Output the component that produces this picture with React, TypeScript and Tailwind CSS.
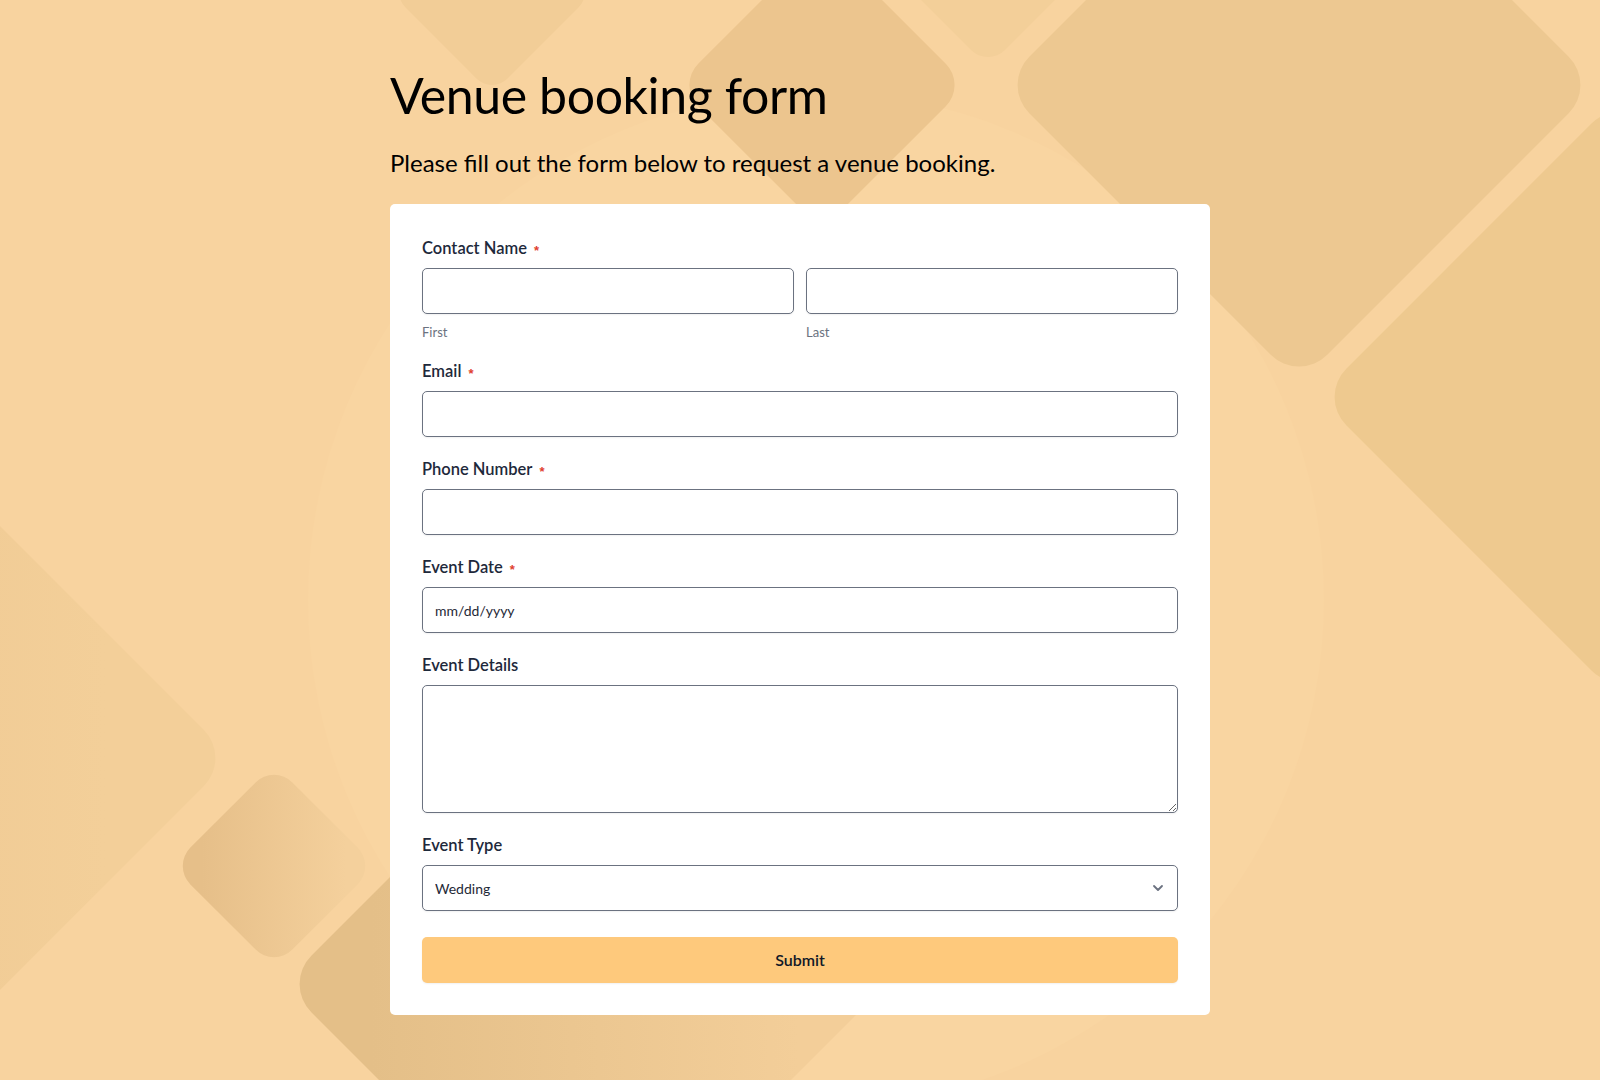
import { ChevronDown } from "lucide-react";

type DiamondProps = { cx: number; cy: number; r: number; rx: number; fill: string };

function Diamond({ cx, cy, r, rx, fill }: DiamondProps) {
    const side = r * Math.SQRT2;
    return (
        <rect
            x={cx - side / 2}
            y={cy - side / 2}
            width={side}
            height={side}
            rx={rx}
            fill={fill}
            transform={`rotate(45 ${cx} ${cy})`}
        />
    );
}

function Backdrop() {
    return (
        <svg className="absolute inset-0 h-full w-full" viewBox="0 0 1600 1080" preserveAspectRatio="none">
            <defs>
                <linearGradient id="gLeft" gradientTransform="rotate(-45 .5 .5)">
                    <stop offset="0" stopColor="#eac28b" />
                    <stop offset="1" stopColor="#f3cf99" />
                </linearGradient>
                <linearGradient id="gSmall" gradientTransform="rotate(-45 .5 .5)">
                    <stop offset="0" stopColor="#e6bf89" />
                    <stop offset="1" stopColor="#f4d09c" />
                </linearGradient>
                <linearGradient id="gBottom" gradientTransform="rotate(-45 .5 .5)">
                    <stop offset="0" stopColor="#e4bf88" />
                    <stop offset="1" stopColor="#f3ce99" />
                </linearGradient>
            </defs>
            <circle cx={816} cy={600} r={508} fill="#f9d5a1" />
            <Diamond cx={492} cy={-8} r={102} rx={22} fill="#f2cd97" />
            <Diamond cx={822} cy={85} r={145} rx={30} fill="#ecc58e" />
            <Diamond cx={988} cy={-45} r={112} rx={24} fill="#f3cf99" />
            <Diamond cx={1299} cy={85} r={298} rx={40} fill="#edc891" />
            <Diamond cx={1620} cy={397} r={302} rx={40} fill="#eec98f" />
            <Diamond cx={-198} cy={758} r={430} rx={40} fill="url(#gLeft)" />
            <Diamond cx={274} cy={866} r={102} rx={26} fill="url(#gSmall)" />
            <Diamond cx={585} cy={984} r={302} rx={40} fill="url(#gBottom)" />
        </svg>
    );
}

function Label({ text, required }: { text: string; required?: boolean }) {
    return (
        <label className="mb-2 flex h-6 items-center text-[16.5px] font-semibold text-[#1e293b]">
            {text}
            {required && (
                <span className="ml-[7px] translate-y-[3px] font-['Liberation_Sans',sans-serif] text-[13px] text-[#e0402f]">
                    *
                </span>
            )}
        </label>
    );
}

const inputCls =
    "block h-[46px] w-full rounded-[5px] border border-[#6b7280] bg-white px-3 text-[14px] text-[#1f2937] shadow-[0_1px_2px_rgba(0,0,0,0.06)] outline-none";

export default function App() {
    return (
        <div className="relative min-h-[1080px] w-full overflow-hidden bg-[#f8d39f] font-['Lato',sans-serif]">
            <Backdrop />
            <div className="relative mx-auto w-[820px] pt-[65px] pb-16">
                <h1 className="text-[50px] leading-[60px] tracking-[-0.4px] text-black">Venue booking form</h1>
                <p className="mt-[22px] text-[24px] leading-[32px] text-black">
                    Please fill out the form below to request a venue booking.
                </p>
                <form className="mt-[25px] rounded-[5px] bg-white p-8" onSubmit={(e) => e.preventDefault()}>
                    <Label text="Contact Name" required />
                    <div className="grid grid-cols-2 gap-3">
                        <div>
                            <input className={inputCls} />
                            <div className="mt-[10px] text-[13px] leading-4 text-[#6b7280]">First</div>
                        </div>
                        <div>
                            <input className={inputCls} />
                            <div className="mt-[10px] text-[13px] leading-4 text-[#6b7280]">Last</div>
                        </div>
                    </div>

                    <div className="mt-[19px]">
                        <Label text="Email" required />
                        <input className={inputCls} type="email" />
                    </div>

                    <div className="mt-5">
                        <Label text="Phone Number" required />
                        <input className={inputCls} type="tel" />
                    </div>

                    <div className="mt-5">
                        <Label text="Event Date" required />
                        <input className={`${inputCls} placeholder:text-[#1f2937]`} placeholder="mm/dd/yyyy" />
                    </div>

                    <div className="mt-5">
                        <Label text="Event Details" />
                        <textarea className="block h-[128px] w-full rounded-[5px] border border-[#6b7280] bg-white px-3 py-2 text-[14px] text-[#1f2937] shadow-[0_1px_2px_rgba(0,0,0,0.06)] outline-none" />
                    </div>

                    <div className="mt-5">
                        <Label text="Event Type" />
                        <div className="relative">
                            <select className={`${inputCls} appearance-none pr-10`} defaultValue="Wedding">
                                <option>Wedding</option>
                                <option>Conference</option>
                                <option>Birthday</option>
                                <option>Other</option>
                            </select>
                            <ChevronDown
                                className="pointer-events-none absolute right-[12px] top-1/2 h-4 w-4 -translate-y-1/2 text-[#6b7280]"
                                strokeWidth={2.75}
                            />
                        </div>
                    </div>

                    <button
                        type="submit"
                        className="mt-[26px] flex h-[46px] w-full items-center justify-center rounded-[5px] bg-[#fec97c] text-[16px] font-semibold text-[#111827] shadow-[0_1px_2px_rgba(0,0,0,0.06)]"
                    >
                        Submit
                    </button>
                </form>
            </div>
        </div>
    );
}
